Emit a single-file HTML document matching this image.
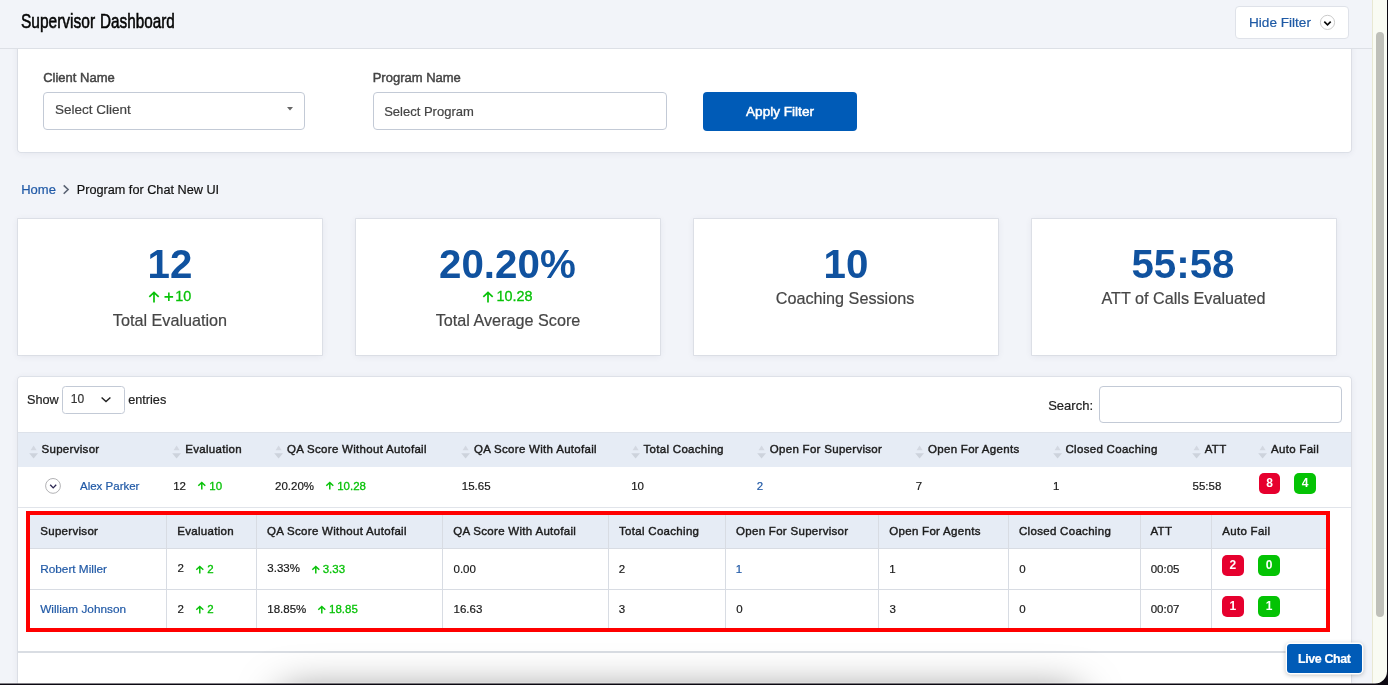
<!DOCTYPE html>
<html><head><meta charset="utf-8"><title>Supervisor Dashboard</title>
<style>
*{box-sizing:border-box;margin:0;padding:0}
html,body{width:1388px;height:685px;overflow:hidden}
body{position:relative;background:#f2f4f9;font-family:"Liberation Sans",sans-serif;color:#222;-webkit-font-smoothing:antialiased}
#root{position:absolute;left:0;top:0;width:1388px;height:685px;overflow:hidden;will-change:transform}
.a{position:absolute}
.t{position:absolute;white-space:nowrap;line-height:1;-webkit-text-stroke:0.2px}
.m{-webkit-text-stroke:0.3px currentColor}
.card{position:absolute;background:#fff;box-shadow:0 0 0 0.8px #d8dbe3,0 1px 7px rgba(50,60,90,.09)}
.big{-webkit-text-stroke:0;font-weight:bold;font-size:40.3px;color:#10529f;text-align:center}
.lbl{font-size:16.2px;color:#464646;text-align:center}
.th{font-size:11.5px;letter-spacing:0.3px;color:#1c1c1c;-webkit-text-stroke:0.42px #1c1c1c}
.td{font-size:11.5px;color:#1a1a1a}
.ti{font-size:11.8px}
.g{color:#08c208}
.lk{color:#2059a6}
.badge{position:absolute;width:21px;height:21.2px;border-radius:5px;color:#fff;font-size:12px;font-weight:bold;text-align:center;line-height:21px}
.r{background:#e6002e}
.gr{background:#04c304;width:21.8px}
.vl{position:absolute;width:1px;background:#d8dce3}
.hl{position:absolute;height:1px;background:#d8dce3}
</style></head>
<body>
<div id="root">
<div class="card" style="left:18px;top:30px;width:1333.3px;height:121.7px;border-radius:3px"></div>
<div class="a" style="left:0;top:0;width:1388px;height:49px;background:#f2f4f9;border-bottom:1px solid #dde0e6"></div>
<div class="t" style="left:21.2px;top:10.2px;font-size:21px;color:#050505;transform-origin:0 0;transform:scaleX(0.738);-webkit-text-stroke:0.6px #050505">Supervisor</div>
<div class="t" style="left:99.9px;top:10.2px;font-size:21px;color:#050505;transform-origin:0 0;transform:scaleX(0.728);-webkit-text-stroke:0.6px #050505">Dashboard</div>
<div class="a" style="left:1235px;top:6px;width:113.7px;height:33px;background:#fff;border:1px solid #dfe2e9;border-radius:4px"></div>
<div class="t " style="left:1249px;top:16px;font-size:13.6px;color:#1e5aa5">Hide Filter</div>
<svg class="a" style="left:1319px;top:14px" width="17" height="17" viewBox="0 0 17 17"><circle cx="8.5" cy="8.4" r="7.1" fill="#fff" stroke="#c4c4c4" stroke-width="0.9"/><path d="M5.3 7.6 L8.5 10.9 L11.7 7.6" fill="none" stroke="#0a0a0a" stroke-width="1.6"/></svg>
<div class="t m" style="left:43.2px;top:70.5px;font-size:13px;color:#444;-webkit-text-stroke:0.45px #444">Client Name</div>
<div class="t m" style="left:372.7px;top:70.5px;font-size:13px;color:#444;-webkit-text-stroke:0.45px #444">Program Name</div>
<div class="a" style="left:43px;top:92px;width:262px;height:38px;background:#fff;border:1px solid #c3cad6;border-radius:4px"></div>
<div class="t " style="left:55px;top:102.6px;font-size:13.5px;color:#444">Select Client</div>
<svg class="a" style="left:286px;top:106px" width="8" height="6" viewBox="0 0 8 6"><path d="M1 1 L7 1 L4 4.6 Z" fill="#666"/></svg>
<div class="a" style="left:373px;top:92px;width:294px;height:38px;background:#fff;border:1px solid #c3cad6;border-radius:4px"></div>
<div class="t " style="left:384.2px;top:105px;font-size:13px;color:#444">Select Program</div>
<div class="a" style="left:703px;top:92px;width:154px;height:39px;background:#005bb7;border-radius:4px"></div>
<div class="t " style="left:746px;top:105px;font-size:13.6px;color:#fff;-webkit-text-stroke:0.5px #fff">Apply Filter</div>
<div class="t " style="left:21.2px;top:182.8px;font-size:13px;color:#2059a6">Home</div>
<svg class="a" style="left:62px;top:184px" width="8" height="11" viewBox="0 0 8 11"><path d="M1.7 1.3 L6.1 5.5 L1.7 9.8" fill="none" stroke="#5a6373" stroke-width="1.6"/></svg>
<div class="t " style="left:76.7px;top:183.6px;font-size:12.7px;color:#111">Program for Chat New UI</div>
<div class="card" style="left:17.9px;top:218.6px;width:304px;height:136.4px"></div>
<div class="t big" style="left:18px;top:245px;width:304px">12</div>
<div class="t lbl" style="left:18px;top:311.8px;width:304px">Total Evaluation</div>
<div class="card" style="left:355.9px;top:218.6px;width:304px;height:136.4px"></div>
<div class="t big" style="left:355.4px;top:245px;width:304px">20.20%</div>
<div class="t lbl" style="left:356px;top:311.8px;width:304px">Total Average Score</div>
<div class="card" style="left:693.9px;top:218.6px;width:304px;height:136.4px"></div>
<div class="t big" style="left:694px;top:245px;width:304px">10</div>
<div class="t lbl" style="left:693px;top:289.6px;width:304px">Coaching Sessions</div>
<div class="card" style="left:1031.9px;top:218.6px;width:304px;height:136.4px"></div>
<div class="t big" style="left:1031px;top:245px;width:304px">55:58</div>
<div class="t lbl" style="left:1031.5px;top:289.6px;width:304px">ATT of Calls Evaluated</div>
<svg class="a" style="left:148.0px;top:290.5px" width="12" height="12.4" viewBox="-1 -1 12 12.4"><path d="M5.0 10.4 V0.4 M0.3 4.9 L5.0 0.5 L9.7 4.9" fill="none" stroke="#08c208" stroke-width="1.7" stroke-linecap="butt" stroke-linejoin="miter"/></svg>
<svg class="a" style="left:164px;top:291.6px" width="10" height="10" viewBox="0 0 10 10"><path d="M0.5 4.9 H9.1 M4.85 0.6 V9.1" fill="none" stroke="#08c208" stroke-width="1.6"/></svg>
<div class="t g" style="left:175.3px;top:288.8px;font-size:14.4px;-webkit-text-stroke:0.3px #08c208">10</div>
<svg class="a" style="left:481.9px;top:290.5px" width="12" height="12.4" viewBox="-1 -1 12 12.4"><path d="M5.0 10.4 V0.4 M0.3 4.9 L5.0 0.5 L9.7 4.9" fill="none" stroke="#08c208" stroke-width="1.7" stroke-linecap="butt" stroke-linejoin="miter"/></svg>
<div class="t g" style="left:496.5px;top:288.8px;font-size:14.4px;-webkit-text-stroke:0.3px #08c208">10.28</div>
<div class="card" style="left:18px;top:376.8px;width:1333.3px;height:330px;border-radius:3px"></div>
<div class="t " style="left:27px;top:394px;font-size:12.7px;color:#222">Show</div>
<div class="a" style="left:62px;top:386px;width:63px;height:28px;background:#fff;border:1px solid #c3cad6;border-radius:3.5px"></div>
<div class="t " style="left:70.8px;top:393px;font-size:12px;color:#333">10</div>
<svg class="a" style="left:100px;top:396px" width="12" height="8" viewBox="0 0 12 8"><path d="M1.6 1.4 L6 5.6 L10.4 1.4" fill="none" stroke="#222" stroke-width="1.4"/></svg>
<div class="t " style="left:128.2px;top:394px;font-size:12.7px;color:#222">entries</div>
<div class="t " style="left:1048.2px;top:398.7px;font-size:13px;color:#222">Search:</div>
<div class="a" style="left:1099px;top:386px;width:243px;height:36.5px;background:#fff;border:1px solid #c3cad6;border-radius:4px"></div>
<div class="a" style="left:18px;top:432.2px;width:1333.3px;height:34.8px;background:#e6ecf5;border-top:1px solid #dde2ea"></div>
<svg class="a" style="left:28.7px;top:444.5px" width="10" height="14" viewBox="0 0 10 14"><path d="M1.6 5.2 L4.6 0.5 L7.6 5.2 Z" fill="#d3d8e1"/><path d="M0.2 8.3 L9 8.3 L4.6 13.4 Z" fill="#cdd3dc"/></svg>
<div class="t th" style="left:41.5px;top:444px;">Supervisor</div>
<svg class="a" style="left:172.45px;top:444.5px" width="10" height="14" viewBox="0 0 10 14"><path d="M1.6 5.2 L4.6 0.5 L7.6 5.2 Z" fill="#d3d8e1"/><path d="M0.2 8.3 L9 8.3 L4.6 13.4 Z" fill="#cdd3dc"/></svg>
<div class="t th" style="left:185.25px;top:444px;">Evaluation</div>
<svg class="a" style="left:274.2px;top:444.5px" width="10" height="14" viewBox="0 0 10 14"><path d="M1.6 5.2 L4.6 0.5 L7.6 5.2 Z" fill="#d3d8e1"/><path d="M0.2 8.3 L9 8.3 L4.6 13.4 Z" fill="#cdd3dc"/></svg>
<div class="t th" style="left:287.0px;top:444px;">QA Score Without Autofail</div>
<svg class="a" style="left:461.2px;top:444.5px" width="10" height="14" viewBox="0 0 10 14"><path d="M1.6 5.2 L4.6 0.5 L7.6 5.2 Z" fill="#d3d8e1"/><path d="M0.2 8.3 L9 8.3 L4.6 13.4 Z" fill="#cdd3dc"/></svg>
<div class="t th" style="left:474.0px;top:444px;">QA Score With Autofail</div>
<svg class="a" style="left:630.7px;top:444.5px" width="10" height="14" viewBox="0 0 10 14"><path d="M1.6 5.2 L4.6 0.5 L7.6 5.2 Z" fill="#d3d8e1"/><path d="M0.2 8.3 L9 8.3 L4.6 13.4 Z" fill="#cdd3dc"/></svg>
<div class="t th" style="left:643.5px;top:444px;">Total Coaching</div>
<svg class="a" style="left:756.95px;top:444.5px" width="10" height="14" viewBox="0 0 10 14"><path d="M1.6 5.2 L4.6 0.5 L7.6 5.2 Z" fill="#d3d8e1"/><path d="M0.2 8.3 L9 8.3 L4.6 13.4 Z" fill="#cdd3dc"/></svg>
<div class="t th" style="left:769.75px;top:444px;">Open For Supervisor</div>
<svg class="a" style="left:915.2px;top:444.5px" width="10" height="14" viewBox="0 0 10 14"><path d="M1.6 5.2 L4.6 0.5 L7.6 5.2 Z" fill="#d3d8e1"/><path d="M0.2 8.3 L9 8.3 L4.6 13.4 Z" fill="#cdd3dc"/></svg>
<div class="t th" style="left:928.0px;top:444px;">Open For Agents</div>
<svg class="a" style="left:1052.7px;top:444.5px" width="10" height="14" viewBox="0 0 10 14"><path d="M1.6 5.2 L4.6 0.5 L7.6 5.2 Z" fill="#d3d8e1"/><path d="M0.2 8.3 L9 8.3 L4.6 13.4 Z" fill="#cdd3dc"/></svg>
<div class="t th" style="left:1065.5px;top:444px;">Closed Coaching</div>
<svg class="a" style="left:1191.95px;top:444.5px" width="10" height="14" viewBox="0 0 10 14"><path d="M1.6 5.2 L4.6 0.5 L7.6 5.2 Z" fill="#d3d8e1"/><path d="M0.2 8.3 L9 8.3 L4.6 13.4 Z" fill="#cdd3dc"/></svg>
<div class="t th" style="left:1204.75px;top:444px;">ATT</div>
<svg class="a" style="left:1258.2px;top:444.5px" width="10" height="14" viewBox="0 0 10 14"><path d="M1.6 5.2 L4.6 0.5 L7.6 5.2 Z" fill="#d3d8e1"/><path d="M0.2 8.3 L9 8.3 L4.6 13.4 Z" fill="#cdd3dc"/></svg>
<div class="t th" style="left:1271.0px;top:444px;">Auto Fail</div>
<div class="hl" style="left:18px;top:507px;width:1333.3px;background:#e1e4ea"></div>
<svg class="a" style="left:45px;top:478px" width="16" height="16" viewBox="0 0 16 16"><circle cx="8" cy="7.9" r="7.4" fill="#fff" stroke="#a9a9ad" stroke-width="0.9"/><path d="M5.2 6.8 L8.2 9.9 L11.2 6.8" fill="none" stroke="#2c2752" stroke-width="1.35"/></svg>
<div class="t td lk" style="left:80px;top:481px;">Alex Parker</div>
<div class="t td" style="left:173.2px;top:480.5px;">12</div>
<svg class="a" style="left:197.3px;top:481.4px" width="9.6" height="9.6" viewBox="-1 -1 9.6 9.6"><path d="M3.8 7.6 V0.4 M0.3 3.6999999999999997 L3.8 0.5 L7.3 3.6999999999999997" fill="none" stroke="#08c208" stroke-width="1.5" stroke-linecap="butt" stroke-linejoin="miter"/></svg>
<div class="t td g m" style="left:209.3px;top:481px;">10</div>
<div class="t td" style="left:275px;top:480.5px;">20.20%</div>
<svg class="a" style="left:324.9px;top:481.4px" width="9.6" height="9.6" viewBox="-1 -1 9.6 9.6"><path d="M3.8 7.6 V0.4 M0.3 3.6999999999999997 L3.8 0.5 L7.3 3.6999999999999997" fill="none" stroke="#08c208" stroke-width="1.5" stroke-linecap="butt" stroke-linejoin="miter"/></svg>
<div class="t td g m" style="left:337.2px;top:481px;">10.28</div>
<div class="t td" style="left:461.8px;top:481px;">15.65</div>
<div class="t td" style="left:631.2px;top:481px;">10</div>
<div class="t td lk" style="left:756.7px;top:481px;">2</div>
<div class="t td" style="left:915.7px;top:481px;">7</div>
<div class="t td" style="left:1053px;top:481px;">1</div>
<div class="t td" style="left:1192.5px;top:481px;">55:58</div>
<div class="badge r" style="left:1259px;top:472.8px">8</div>
<div class="badge gr" style="left:1294.3px;top:472.8px">4</div>
<div class="a" style="left:26px;top:511.3px;width:1304px;height:120.7px;border:4px solid #f00"></div>
<div class="a" style="left:30px;top:515px;width:1296px;height:33px;background:#e6ecf5"></div>
<div class="hl" style="left:30px;top:548px;width:1296px"></div>
<div class="hl" style="left:30px;top:589px;width:1296px"></div>
<div class="vl" style="left:166px;top:515px;height:113px"></div>
<div class="vl" style="left:256px;top:515px;height:113px"></div>
<div class="vl" style="left:442px;top:515px;height:113px"></div>
<div class="vl" style="left:608px;top:515px;height:113px"></div>
<div class="vl" style="left:725px;top:515px;height:113px"></div>
<div class="vl" style="left:878px;top:515px;height:113px"></div>
<div class="vl" style="left:1008px;top:515px;height:113px"></div>
<div class="vl" style="left:1140px;top:515px;height:113px"></div>
<div class="vl" style="left:1211px;top:515px;height:113px"></div>
<div class="t th" style="left:40.25px;top:526.2px;">Supervisor</div>
<div class="t th" style="left:177.25px;top:526.2px;">Evaluation</div>
<div class="t th" style="left:267.0px;top:526.2px;">QA Score Without Autofail</div>
<div class="t th" style="left:453.25px;top:526.2px;">QA Score With Autofail</div>
<div class="t th" style="left:619.0px;top:526.2px;">Total Coaching</div>
<div class="t th" style="left:736.0px;top:526.2px;">Open For Supervisor</div>
<div class="t th" style="left:889.25px;top:526.2px;">Open For Agents</div>
<div class="t th" style="left:1019.0px;top:526.2px;">Closed Coaching</div>
<div class="t th" style="left:1150.5px;top:526.2px;">ATT</div>
<div class="t th" style="left:1222.25px;top:526.2px;">Auto Fail</div>
<div class="t td ti lk" style="left:40.2px;top:564px;">Robert Miller</div>
<div class="t td" style="left:177.5px;top:563px;">2</div>
<svg class="a" style="left:195.4px;top:564.9px" width="9.6" height="9.6" viewBox="-1 -1 9.6 9.6"><path d="M3.8 7.6 V0.4 M0.3 3.6999999999999997 L3.8 0.5 L7.3 3.6999999999999997" fill="none" stroke="#08c208" stroke-width="1.5" stroke-linecap="butt" stroke-linejoin="miter"/></svg>
<div class="t td g m" style="left:207.3px;top:564px;">2</div>
<div class="t td" style="left:267.3px;top:563px;">3.33%</div>
<svg class="a" style="left:311.1px;top:564.9px" width="9.6" height="9.6" viewBox="-1 -1 9.6 9.6"><path d="M3.8 7.6 V0.4 M0.3 3.6999999999999997 L3.8 0.5 L7.3 3.6999999999999997" fill="none" stroke="#08c208" stroke-width="1.5" stroke-linecap="butt" stroke-linejoin="miter"/></svg>
<div class="t td g m" style="left:322.7px;top:564px;">3.33</div>
<div class="t td" style="left:453.5px;top:564px;">0.00</div>
<div class="t td" style="left:618.7px;top:564px;">2</div>
<div class="t td lk" style="left:735.7px;top:564px;">1</div>
<div class="t td" style="left:889.2px;top:564px;">1</div>
<div class="t td" style="left:1019.2px;top:564px;">0</div>
<div class="t td" style="left:1150.7px;top:564px;">00:05</div>
<div class="badge r" style="left:1222px;top:555px;width:21.7px">2</div>
<div class="badge gr" style="left:1258.2px;top:555px">0</div>
<div class="t td ti lk" style="left:40.2px;top:604px;">William Johnson</div>
<div class="t td" style="left:177.5px;top:604px;">2</div>
<svg class="a" style="left:195.4px;top:604.9px" width="9.6" height="9.6" viewBox="-1 -1 9.6 9.6"><path d="M3.8 7.6 V0.4 M0.3 3.6999999999999997 L3.8 0.5 L7.3 3.6999999999999997" fill="none" stroke="#08c208" stroke-width="1.5" stroke-linecap="butt" stroke-linejoin="miter"/></svg>
<div class="t td g m" style="left:207.3px;top:604px;">2</div>
<div class="t td" style="left:267.3px;top:604px;">18.85%</div>
<svg class="a" style="left:317.4px;top:604.9px" width="9.6" height="9.6" viewBox="-1 -1 9.6 9.6"><path d="M3.8 7.6 V0.4 M0.3 3.6999999999999997 L3.8 0.5 L7.3 3.6999999999999997" fill="none" stroke="#08c208" stroke-width="1.5" stroke-linecap="butt" stroke-linejoin="miter"/></svg>
<div class="t td g m" style="left:329px;top:604px;">18.85</div>
<div class="t td" style="left:453.5px;top:604px;">16.63</div>
<div class="t td" style="left:618.7px;top:604px;">3</div>
<div class="t td" style="left:736.2px;top:604px;">0</div>
<div class="t td" style="left:889.5px;top:604px;">3</div>
<div class="t td" style="left:1019.2px;top:604px;">0</div>
<div class="t td" style="left:1150.7px;top:604px;">00:07</div>
<div class="badge r" style="left:1222px;top:596px;width:21.7px">1</div>
<div class="badge gr" style="left:1258.2px;top:596px">1</div>
<div class="a" style="left:18px;top:651px;width:1333.3px;height:1.5px;background:#d9dde3"></div>
<div class="a" style="left:290px;top:702px;width:780px;height:40px;border-radius:6px;box-shadow:0 0 40px 10px rgba(0,0,0,.5)"></div>

<div class="a" style="left:1287.4px;top:644.3px;width:74.2px;height:29.2px;border-radius:3.5px;background:#005bb7;box-shadow:0 0 0 1.4px #fff,0 1px 5px 1px rgba(0,0,0,.28)"></div>
<div class="t " style="left:1298px;top:653px;font-size:12.4px;font-weight:bold;color:#fff;letter-spacing:-0.35px">Live Chat</div>
<div class="a" style="left:1372px;top:0;width:16px;height:685px;background:#f9fbf3;border-left:1px solid #e8e8d2"></div>
<div class="a" style="left:1376px;top:32px;width:8px;height:584.5px;border-radius:4px;background:#bfc0b9"></div>
<svg class="a" style="left:0;top:0" width="1388" height="685" viewBox="0 0 1388 685"><path d="M0 682.7 H1376 V683.6 H0 Z" fill="#fff" opacity=".85"/><path d="M0 683.5 H1375 A12 12 0 0 0 1387 671.5 V0 H1388 V685 H0 Z" fill="#0c0912"/></svg>
</div>
</body></html>
